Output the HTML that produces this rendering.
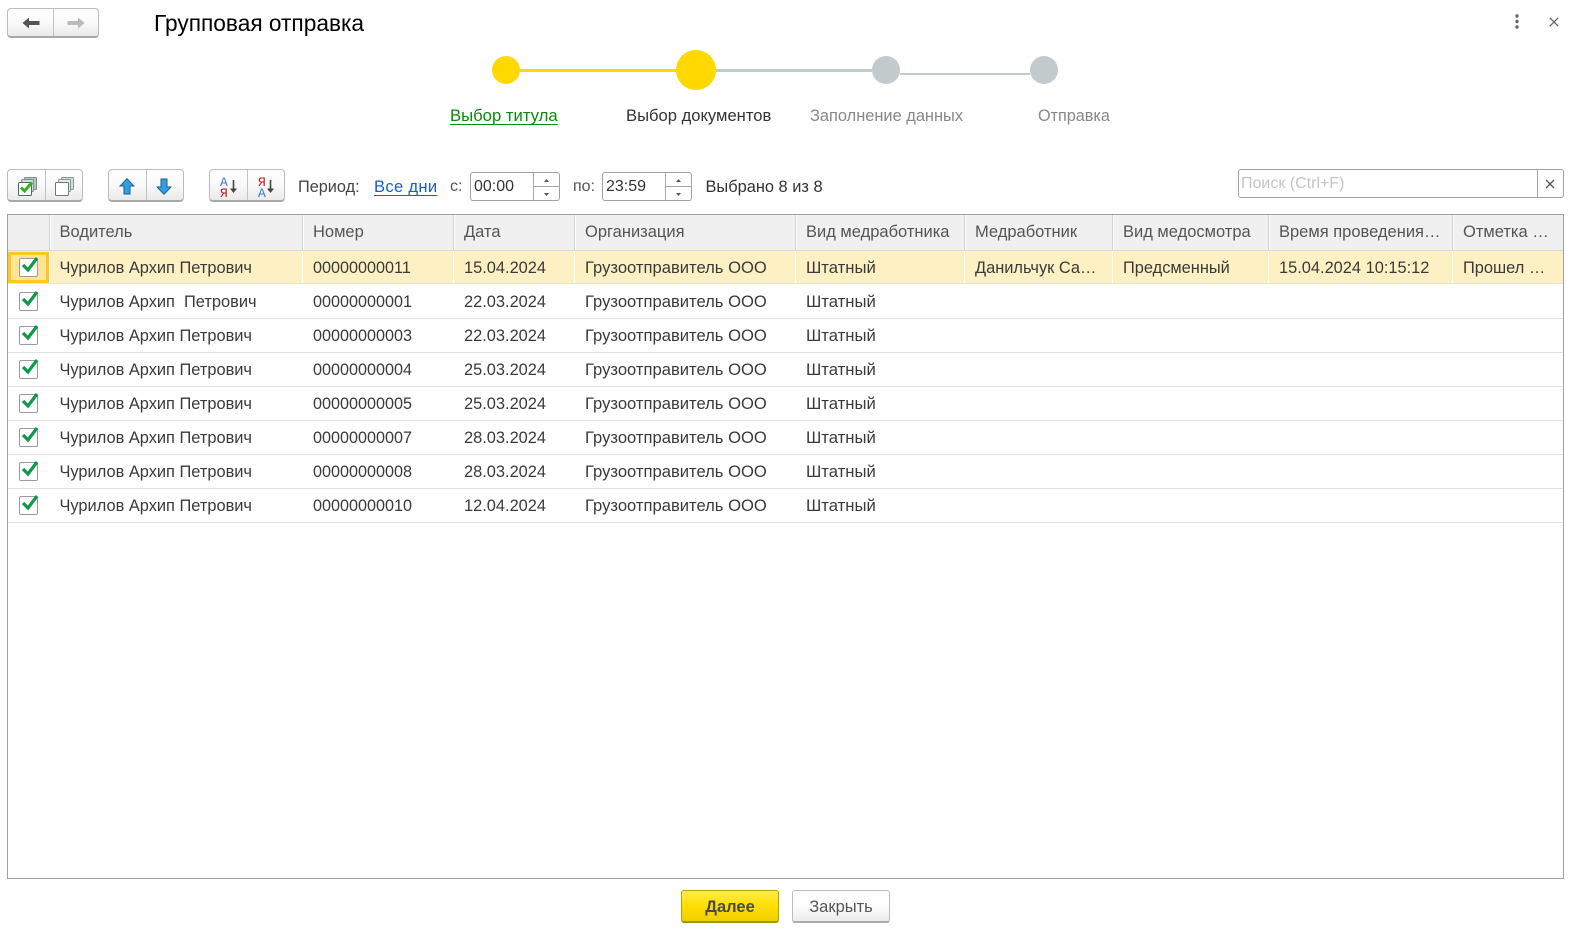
<!DOCTYPE html>
<html lang="ru"><head><meta charset="utf-8"><title>Групповая отправка</title>
<style>
html,body{margin:0;padding:0;background:#fff}
body{width:1585px;height:939px;position:relative;overflow:hidden;font-family:"Liberation Sans",Arial,sans-serif;font-size:16px;color:#333}
.a{position:absolute}
.t{position:absolute;white-space:nowrap;line-height:20px}
.btn{position:absolute;box-sizing:border-box;border:1px solid #bcbcbc;border-bottom:2px solid #a8a8a8;border-radius:4px;background:linear-gradient(#fff 0%,#fafafa 50%,#e9e9e9 100%)}
.btn i{position:absolute;top:0;bottom:0;width:1px;background:#c4c4c4}
.btn svg,.a svg{display:block}
.dot{position:absolute;border-radius:50%}
.inp{position:absolute;box-sizing:border-box;border:1px solid #a2a2a2;border-radius:3px;background:#fff}
#tb{position:absolute;left:7px;top:214px;width:1557px;height:665px;box-sizing:border-box;border:1px solid #a0a0a0;overflow:hidden}
.hd{position:absolute;left:0;top:0;width:1555px;height:35px;background:#f0f0f0;border-bottom:2px solid #d8d8d8}
.hd span,.r span{position:absolute;white-space:nowrap;line-height:20px}
.hd span{top:7px;color:#555;font-size:16.5px}
.v{position:absolute;top:0;width:1px;height:35px;background:#d9d9d9}
.hd .v{background:#d4d4d4;box-shadow:1px 0 0 #fff}
.r{position:absolute;left:0;width:1555px;height:33px;border-bottom:1px solid #e4e4e4}
.r span{top:7px;color:#3a3a3a;font-size:16.4px}
.r span.c1{font-size:16.2px}
.r span.c3{font-size:16.6px}
.r span.c4{font-size:16.7px}
.sel{background:#fdf1c4}
.sel .v{width:1px;height:32px;background:#fff}
.c0{left:51.5px}.c1{left:305px}.c2{left:456px}.c3{left:577px}.c4{left:798px}.c5{left:967px}.c6{left:1115px}.c7{left:1271px}.c8{left:1455px}
.cb{position:absolute;left:11px;top:7px;width:19px;height:19px;box-sizing:border-box;border:1px solid #9a9a9a;border-radius:2px;background:#fff}
.ck{position:absolute;left:12px;top:2px}
.foc{position:absolute;left:0;top:1px;width:41px;height:31px;box-sizing:border-box;border:3px solid #fcc81c;background:#fde497}
</style></head><body>

<div class="btn" style="left:7px;top:8px;width:92px;height:30px">
<i style="left:45px"></i>
<svg class="a" style="left:14px;top:8px" width="18" height="12" viewBox="0 0 18 12"><path d="M0.5 6L7 .5V4H17.5V8H7V11.5Z" fill="#555"/></svg>
<svg class="a" style="left:59px;top:8px" width="18" height="12" viewBox="0 0 18 12"><path d="M17.5 6L11 .5V4H.5V8H11V11.5Z" fill="#bbb"/></svg>
</div>
<div class="t" style="left:154px;top:11px;font-size:22.7px;line-height:24px;color:#000">Групповая отправка</div>

<svg class="a" style="left:1512px;top:13px" width="10" height="17"><circle cx="5" cy="3" r="1.7" fill="#666"/><circle cx="5" cy="8.5" r="1.7" fill="#666"/><circle cx="5" cy="14" r="1.7" fill="#666"/></svg>
<svg class="a" style="left:1549px;top:17px" width="10" height="10"><path d="M.8.8L9.2 9.2M9.2.8L.8 9.2" stroke="#666" stroke-width="1.3"/></svg>

<div class="a" style="left:520px;top:69px;width:156px;height:3px;background:#ffd800"></div>
<div class="a" style="left:716px;top:69px;width:156px;height:3px;background:#c3cacc"></div>
<div class="a" style="left:900px;top:73px;width:130px;height:2px;background:#c3cacc"></div>
<div class="dot" style="left:492px;top:56px;width:28px;height:28px;background:#ffd800"></div>
<div class="dot" style="left:676px;top:50px;width:40px;height:40px;background:#ffd800"></div>
<div class="dot" style="left:872px;top:56px;width:28px;height:28px;background:#c3cacc"></div>
<div class="dot" style="left:1030px;top:56px;width:28px;height:28px;background:#c3cacc"></div>

<div class="t" style="left:450px;top:106px;font-size:16.7px;color:#0a8a0a;text-decoration:underline;text-underline-offset:3px">Выбор титула</div>
<div class="t" style="left:626px;top:106px;font-size:16.6px;color:#333">Выбор документов</div>
<div class="t" style="left:810px;top:106px;font-size:16.4px;color:#888">Заполнение данных</div>
<div class="t" style="left:1038px;top:106px;font-size:16.2px;color:#888">Отправка</div>

<div class="btn" style="left:7px;top:169px;width:76px;height:33px">
<i style="left:37px"></i>
<svg class="a" style="left:10px;top:7px" width="19" height="19" viewBox="0 0 19 19">
<rect x="6.5" y=".5" width="12" height="12" rx="1" fill="#b5c3bf" stroke="#7f8f8c"/>
<rect x="3.5" y="2.5" width="12" height="12" rx="1" fill="#cfd9d6" stroke="#7f8f8c"/>
<rect x=".5" y="5.5" width="13" height="13" rx="1" fill="#fff" stroke="#4d6b66"/>
<path d="M3 10.5L6.5 14L14 5.5" fill="none" stroke="#32b01e" stroke-width="3"/></svg>
<svg class="a" style="left:47px;top:7px" width="19" height="19" viewBox="0 0 19 19">
<rect x="6.5" y=".5" width="12" height="12" rx="1" fill="#d5dcdc" stroke="#8a9696"/>
<rect x="3.5" y="2.5" width="12" height="12" rx="1" fill="#e4e9e9" stroke="#8a9696"/>
<rect x=".5" y="5.5" width="13" height="13" rx="1" fill="#fff" stroke="#6b7878"/></svg>
</div>

<div class="btn" style="left:108px;top:169px;width:76px;height:33px">
<i style="left:37px"></i>
<svg class="a" style="left:10px;top:8px" width="16" height="17" viewBox="0 0 16 17"><path d="M8 .7L15 8H11V16H5V8H1Z" fill="#2f9fe8" stroke="#1f5f8c" stroke-width="1"/></svg>
<svg class="a" style="left:47px;top:8px" width="16" height="17" viewBox="0 0 16 17"><path d="M8 16.3L15 9H11V1H5V9H1Z" fill="#2f9fe8" stroke="#1f5f8c" stroke-width="1"/></svg>
</div>

<div class="btn" style="left:209px;top:169px;width:76px;height:33px">
<i style="left:37px"></i>
<svg class="a" style="left:10px;top:6px" width="20" height="22" viewBox="0 0 20 22">
<text x="0" y="10" font-family="Liberation Mono,monospace" font-size="13" fill="#2f7fd0">А</text>
<text x="0" y="21" font-family="Liberation Mono,monospace" font-size="13" fill="#c01818">Я</text>
<path d="M13.5 4V14" stroke="#444" stroke-width="1.6"/><path d="M10 12.5H17L13.5 17Z" fill="#444"/></svg>
<svg class="a" style="left:48px;top:6px" width="20" height="22" viewBox="0 0 20 22">
<text x="0" y="10" font-family="Liberation Mono,monospace" font-size="13" fill="#c01818">Я</text>
<text x="0" y="21" font-family="Liberation Mono,monospace" font-size="13" fill="#2f7fd0">А</text>
<path d="M12.5 4V14" stroke="#444" stroke-width="1.6"/><path d="M9 12.5H16L12.5 17Z" fill="#444"/></svg>
</div>

<div class="t" style="left:298px;top:177px;font-size:16.3px;color:#444">Период:</div>
<div class="t" style="left:374px;top:177px;font-size:16.6px;letter-spacing:.3px;color:#1a5ec4;text-decoration:underline;text-underline-offset:3px">Все дни</div>
<div class="t" style="left:450px;top:177px;color:#555">с:</div>

<div class="inp" style="left:470px;top:172px;width:90px;height:29px">
<span class="t" style="left:3px;top:4px">00:00</span>
<div class="a" style="left:62px;top:0;width:1px;height:27px;background:#a8a8a8"></div>
<div class="a" style="left:62px;top:13px;width:26px;height:1px;background:#a8a8a8"></div>
<svg class="a" style="left:72px;top:5px" width="7" height="19"><path d="M1 4L3.5 1L6 4Z" fill="#555"/><path d="M1 15L3.5 18L6 15Z" fill="#555"/></svg>
</div>
<div class="t" style="left:573px;top:177px;color:#555">по:</div>
<div class="inp" style="left:602px;top:172px;width:90px;height:29px">
<span class="t" style="left:3px;top:4px">23:59</span>
<div class="a" style="left:62px;top:0;width:1px;height:27px;background:#a8a8a8"></div>
<div class="a" style="left:62px;top:13px;width:26px;height:1px;background:#a8a8a8"></div>
<svg class="a" style="left:72px;top:5px" width="7" height="19"><path d="M1 4L3.5 1L6 4Z" fill="#555"/><path d="M1 15L3.5 18L6 15Z" fill="#555"/></svg>
</div>
<div class="t" style="left:705.5px;top:177px;font-size:16.4px;color:#333">Выбрано 8 из 8</div>

<div class="inp" style="left:1238px;top:169px;width:326px;height:29px">
<span class="t" style="left:2px;top:4px;color:#c4c4c4">Поиск (Ctrl+F)</span>
<div class="a" style="left:298px;top:0;width:1px;height:27px;background:#a2a2a2"></div>
<svg class="a" style="left:306px;top:9px" width="10" height="10"><path d="M1 1L9 9M9 1L1 9" stroke="#555" stroke-width="1.3"/></svg>
</div>

<div id="tb">
<div class="hd">
<div class="v" style="left:41px"></div><div class="v" style="left:294px"></div><div class="v" style="left:445px"></div><div class="v" style="left:566px"></div><div class="v" style="left:787px"></div><div class="v" style="left:956px"></div><div class="v" style="left:1104px"></div><div class="v" style="left:1260px"></div><div class="v" style="left:1444px"></div>
<span class="c0">Водитель</span><span class="c1">Номер</span><span class="c2">Дата</span><span class="c3">Организация</span><span class="c4">Вид медработника</span><span class="c5">Медработник</span><span class="c6">Вид медосмотра</span><span class="c7">Время проведения…</span><span class="c8">Отметка …</span>
</div>

<div class="r sel" style="top:36px;height:32px">
<div class="foc"></div>
<div class="v" style="left:41px"></div><div class="v" style="left:294px"></div><div class="v" style="left:445px"></div><div class="v" style="left:566px"></div><div class="v" style="left:787px"></div><div class="v" style="left:956px"></div><div class="v" style="left:1104px"></div><div class="v" style="left:1260px"></div><div class="v" style="left:1444px"></div>
<div class="cb"></div><svg class="ck" width="20" height="20" viewBox="0 0 20 20"><path d="M3 12L8 17L17 5" fill="none" stroke="#0c9a4a" stroke-width="3.2"/></svg>
<span class="c0">Чурилов Архип Петрович</span><span class="c1">00000000011</span><span class="c2">15.04.2024</span><span class="c3">Грузоотправитель ООО</span><span class="c4">Штатный</span><span class="c5">Данильчук Са…</span><span class="c6">Предсменный</span><span class="c7">15.04.2024 10:15:12</span><span class="c8">Прошел …</span>
</div>

<div class="r" style="top:70px"><div class="cb"></div><svg class="ck" width="20" height="20" viewBox="0 0 20 20"><path d="M3 12L8 17L17 5" fill="none" stroke="#0c9a4a" stroke-width="3.2"/></svg>
<span class="c0">Чурилов Архип&nbsp; Петрович</span><span class="c1">00000000001</span><span class="c2">22.03.2024</span><span class="c3">Грузоотправитель ООО</span><span class="c4">Штатный</span></div>

<div class="r" style="top:104px"><div class="cb"></div><svg class="ck" width="20" height="20" viewBox="0 0 20 20"><path d="M3 12L8 17L17 5" fill="none" stroke="#0c9a4a" stroke-width="3.2"/></svg>
<span class="c0">Чурилов Архип Петрович</span><span class="c1">00000000003</span><span class="c2">22.03.2024</span><span class="c3">Грузоотправитель ООО</span><span class="c4">Штатный</span></div>

<div class="r" style="top:138px"><div class="cb"></div><svg class="ck" width="20" height="20" viewBox="0 0 20 20"><path d="M3 12L8 17L17 5" fill="none" stroke="#0c9a4a" stroke-width="3.2"/></svg>
<span class="c0">Чурилов Архип Петрович</span><span class="c1">00000000004</span><span class="c2">25.03.2024</span><span class="c3">Грузоотправитель ООО</span><span class="c4">Штатный</span></div>

<div class="r" style="top:172px"><div class="cb"></div><svg class="ck" width="20" height="20" viewBox="0 0 20 20"><path d="M3 12L8 17L17 5" fill="none" stroke="#0c9a4a" stroke-width="3.2"/></svg>
<span class="c0">Чурилов Архип Петрович</span><span class="c1">00000000005</span><span class="c2">25.03.2024</span><span class="c3">Грузоотправитель ООО</span><span class="c4">Штатный</span></div>

<div class="r" style="top:206px"><div class="cb"></div><svg class="ck" width="20" height="20" viewBox="0 0 20 20"><path d="M3 12L8 17L17 5" fill="none" stroke="#0c9a4a" stroke-width="3.2"/></svg>
<span class="c0">Чурилов Архип Петрович</span><span class="c1">00000000007</span><span class="c2">28.03.2024</span><span class="c3">Грузоотправитель ООО</span><span class="c4">Штатный</span></div>

<div class="r" style="top:240px"><div class="cb"></div><svg class="ck" width="20" height="20" viewBox="0 0 20 20"><path d="M3 12L8 17L17 5" fill="none" stroke="#0c9a4a" stroke-width="3.2"/></svg>
<span class="c0">Чурилов Архип Петрович</span><span class="c1">00000000008</span><span class="c2">28.03.2024</span><span class="c3">Грузоотправитель ООО</span><span class="c4">Штатный</span></div>

<div class="r" style="top:274px"><div class="cb"></div><svg class="ck" width="20" height="20" viewBox="0 0 20 20"><path d="M3 12L8 17L17 5" fill="none" stroke="#0c9a4a" stroke-width="3.2"/></svg>
<span class="c0">Чурилов Архип Петрович</span><span class="c1">00000000010</span><span class="c2">12.04.2024</span><span class="c3">Грузоотправитель ООО</span><span class="c4">Штатный</span></div>
</div>

<div class="a" style="left:681px;top:890px;width:98px;height:33px;box-sizing:border-box;border:1px solid #b8a200;border-bottom:2px solid #a89400;border-radius:3px;background:linear-gradient(#ffec4a,#ffde00 50%,#efd000);text-align:center;line-height:32px;font-size:16.5px;font-weight:bold;color:#4a4a4a">Далее</div>
<div class="a" style="left:792px;top:890px;width:98px;height:33px;box-sizing:border-box;border:1px solid #bdbdbd;border-bottom:2px solid #ababab;border-radius:3px;background:linear-gradient(#fff,#fdfdfd 50%,#ebebeb);text-align:center;line-height:32px;font-size:16.5px;color:#555">Закрыть</div>

</body></html>
